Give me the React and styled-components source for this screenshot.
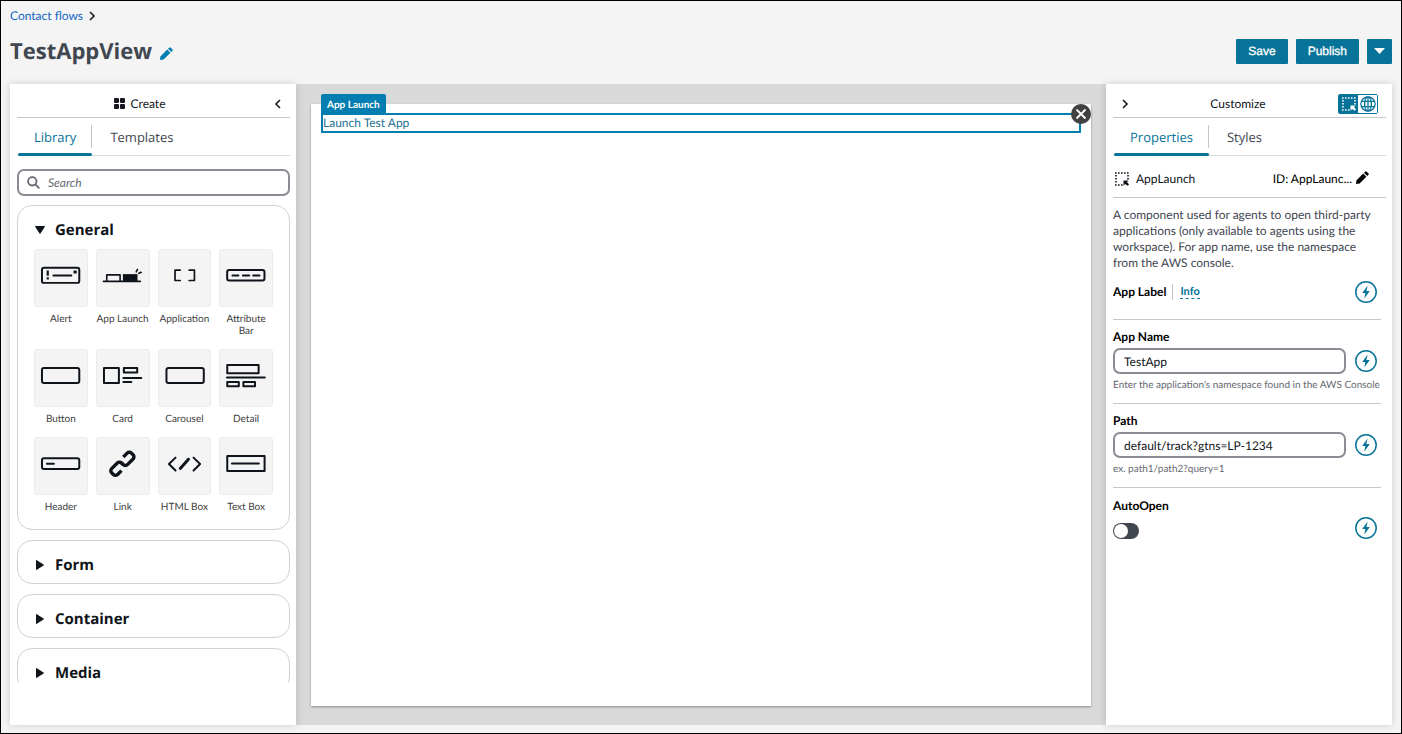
import { useState } from 'react'
import styled, { createGlobalStyle } from 'styled-components'

const teal = '#077398'
const line = '#c6c6cd'
const ink = '#0f141a'
const headingFont = "'Open Sans', 'Noto Sans', sans-serif"

const GlobalStyle = createGlobalStyle`
    * {
        box-sizing: border-box;
    }
    body {
        margin: 0;
        background: #f4f4f4;
        color: ${ink};
        font-family: Lato, 'Open Sans', sans-serif;
        font-size: 12px;
        line-height: 16px;
        text-rendering: geometricPrecision;
    }
    button,
    input {
        font: inherit;
        color: inherit;
        text-rendering: inherit;
    }
    button {
        border: 0;
        padding: 0;
        background: none;
        cursor: pointer;
    }
    svg {
        display: block;
    }
`

const Page = styled.div`
    display: flex;
    flex-direction: column;
    height: 100vh;
    border: 1px solid #000;
    padding: 6px 9px 8px;
`

const Breadcrumb = styled.nav`
    display: flex;
    align-items: center;
    gap: 5px;
    height: 17px;

    a {
        color: #1166c4;
        text-decoration: none;
    }
`

const TitleBar = styled.header`
    display: flex;
    align-items: center;
    justify-content: space-between;
    height: 40px;
    margin: 7px 0 13px;
`

const TitleGroup = styled.div`
    display: flex;
    align-items: center;
    gap: 8px;
`

const Title = styled.h1`
    margin: 0;
    color: #414750;
    font-family: ${headingFont};
    font-size: 22px;
    line-height: 32px;
    font-weight: 700;
`

const RenameButton = styled.button`
    padding-top: 4px;
`

const Actions = styled.div`
    display: flex;
    gap: 8px;
`

const ActionButton = styled.button`
    display: flex;
    align-items: center;
    justify-content: center;
    height: 25px;
    padding: 0 ${(p) => (p.$narrow ? 7 : 12)}px;
    border-radius: 1px;
    background: ${teal};
    color: #fff;
    font-family: 'Liberation Sans', sans-serif;
    -webkit-text-stroke: 0.3px #fff;
`

const Workspace = styled.main`
    display: flex;
    flex: 1;
    min-height: 0;
`

const Panel = styled.section`
    display: flex;
    flex-direction: column;
    flex: 0 0 286px;
    min-width: 0;
    position: relative;
    padding: 0 6px 42px 7px;
    background: #fff;
    box-shadow: 0 0 8px rgba(0, 0, 0, 0.16);
`

const PanelHeader = styled.div`
    display: flex;
    align-items: center;
    flex: none;
    height: 34px;
    padding: 6px 8px 0;
    border-bottom: 1px solid ${line};
`

const PanelTitle = styled.h2`
    display: flex;
    flex: 1;
    align-items: center;
    justify-content: center;
    gap: 6px;
    margin: 0;
    font-size: 12px;
    font-weight: 400;
`

const HeaderStart = styled.div`
    display: flex;
    width: 17px;
`

const HeaderEnd = styled.div`
    display: flex;
    justify-content: flex-end;
    min-width: 28px;
`

const ModeGroup = styled.div`
    display: flex;
    border: 1px solid ${teal};
    border-radius: 2px;
`

const ModeButton = styled.button`
    display: flex;
    align-items: center;
    justify-content: center;
    width: 19px;
    height: 18px;
    background: ${(p) => (p.$active ? teal : '#fff')};
    color: ${(p) => (p.$active ? '#fff' : teal)};
`

const Tabs = styled.div`
    display: flex;
    flex: none;
    height: 38px;
    padding-left: 1px;
    border-bottom: 1px solid #d5dbdb;
`

const Tab = styled.button`
    position: relative;
    padding: 0 ${(p) => (p.$last ? 18 : 16)}px;
    color: ${(p) => (p.$active ? teal : '#424650')};
    font-family: ${headingFont};
    font-size: 13px;

    &::before {
        content: '';
        position: absolute;
        right: 0;
        top: 7px;
        height: 23px;
        border-right: 1px solid ${(p) => (p.$last ? 'transparent' : line)};
    }

    &::after {
        content: '';
        position: absolute;
        left: 0;
        right: 0;
        bottom: -1px;
        height: 3px;
        border-radius: 2px;
        background: ${(p) => (p.$active ? teal : 'transparent')};
    }
`

const SearchBox = styled.label`
    display: flex;
    align-items: center;
    flex: none;
    gap: 8px;
    height: 27px;
    margin: 13px 0 9px;
    padding: 0 8px;
    border: 2px solid #8c8c94;
    border-radius: 7px;

    input {
        flex: 1;
        min-width: 0;
        border: 0;
        padding: 0;
        outline: 0;
        background: none;
    }
    input::placeholder {
        color: #656871;
        font-style: italic;
    }
`

const Library = styled.div`
    display: flex;
    flex-direction: column;
    gap: 10px;
    flex: 1;
    min-height: 0;
    overflow: hidden;
`

const Group = styled.section`
    flex: none;
    border: 1px solid #d0d2d8;
    border-radius: 15px;
`

const GroupToggle = styled.button`
    display: flex;
    align-items: center;
    gap: 9px;
    width: 100%;
    height: 42px;
    padding: 5px 16px 0;
    font-family: ${headingFont};
    font-size: 15px;
    font-weight: 700;
`

const TileGrid = styled.div`
    display: grid;
    grid-template-columns: repeat(4, minmax(0, 1fr));
    gap: 12px 8px;
    padding: 1px 16px 16px;
`

const Tile = styled.button`
    display: flex;
    flex-direction: column;
    align-items: center;
    gap: 6px;
    color: #414141;
    font-size: 10px;
    line-height: 12px;
`

const TileArt = styled.span`
    display: flex;
    justify-content: center;
    width: 100%;
    border: 1px solid #e9ebed;
    border-radius: 3px;
    background: #f4f4f4;
    color: ${ink};
`

const Canvas = styled.section`
    display: flex;
    flex: 1;
    min-width: 0;
    padding: 20px 15px 19px;
    background: #d9d9d9;
`

const Sheet = styled.div`
    flex: 1;
    padding: 9px 10px;
    background: #fff;
    box-shadow: 0 1px 2px rgba(0, 28, 36, 0.4);
`

const Placed = styled.div`
    position: relative;
    height: 20px;
    border: 2px solid #047db1;

    a {
        display: block;
        color: #1f7396;
        text-decoration: none;
    }
`

const PlacedTag = styled.span`
    position: absolute;
    left: -2px;
    bottom: 16px;
    padding: 3px 6px 2px;
    border-radius: 2px 2px 0 0;
    background: #047db1;
    color: #fff;
    font-size: 10px;
    font-weight: 700;
`

const RemoveButton = styled.button`
    position: absolute;
    top: -11px;
    right: -12px;
`

const SelectedRow = styled.div`
    display: flex;
    align-items: center;
    gap: 7px;
    flex: none;
    height: 42px;
    padding: 4px 17px 0 2px;
    border-bottom: 1px solid ${line};
`

const SelectedId = styled.span`
    display: flex;
    align-items: center;
    gap: 4px;
    margin-left: auto;
    color: #000;

    button {
        padding-bottom: 3px;
    }
`

const Description = styled.p`
    margin: 9px 4px 0 0;
    color: #424650;
`

const Field = styled.div`
    display: grid;
    grid-template-columns: 1fr 22px;
    column-gap: 9px;
    align-items: center;
    margin-right: 5px;
    padding: ${(p) => p.$padding || '9px 4px 11px 0'};
    border-bottom: 1px solid ${(p) => (p.$last ? 'transparent' : line)};
`

const FieldLabel = styled.label`
    grid-column: 1 / -1;
    margin-bottom: 3px;
    font-weight: 700;
    color: #000;
`

const LabelRow = styled.div`
    display: flex;
    align-items: center;
    font-weight: 700;
    color: #000;

    a {
        margin-left: 6px;
        padding-left: 7px;
        border-left: 1px solid ${line};
        color: ${teal};
        font-size: 11px;
        text-decoration: none;
    }
    a span {
        border-bottom: 1px dashed ${teal};
    }
`

const TextInput = styled.input`
    width: 100%;
    height: 26px;
    padding: 0 9px;
    border: 2px solid #8c8c94;
    border-radius: 7px;
    background: #fff;
`

const Hint = styled.small`
    grid-column: 1 / -1;
    margin-top: 4px;
    color: #656871;
    font-size: 10px;
    line-height: 14px;
    white-space: nowrap;
`

const Switch = styled.input`
    appearance: none;
    width: 26px;
    height: 16px;
    margin: 5px 0 0;
    padding: 1px;
    border-radius: 8px;
    background: ${(p) => (p.checked ? teal : '#424650')};
    cursor: pointer;

    &::before {
        content: '';
        display: block;
        width: 14px;
        height: 14px;
        margin-left: ${(p) => (p.checked ? 10 : 0)}px;
        border-radius: 50%;
        background: #fff;
    }
`

const Chevron = ({ left }) => (
    <svg width="8" height="10" viewBox="0 0 8 10" fill="none" stroke="#16191f" strokeWidth="1.6">
        <path d={left ? 'M6 1 2 5l4 4' : 'M2 1l4 4-4 4'} />
    </svg>
)

const Pencil = ({ color }) => (
    <svg width="13" height="13" viewBox="0 0 13 13" fill={color}>
        <path d="M0 13l.4-3.6L7.2 2.6l3.2 3.2-6.8 6.8zM8 1.8 9.4.4q.5-.5 1 0l2.2 2.2q.5.5 0 1L11.2 5z" />
    </svg>
)

const Caret = ({ open }) => (
    <svg width="12" height="12" viewBox="0 0 12 12" fill={ink} stroke={ink} strokeLinejoin="round">
        <path d={open ? 'M1.5 2.5h9L6 9.5z' : 'M2.5 1.5v9l7-4.5z'} />
    </svg>
)

const Marquee = () => (
    <svg width="14" height="14" viewBox="0 0 14 14" fill="none" stroke="currentColor">
        <path d="M0 1h14M0 13h8M1 3v9M13 3v5" strokeWidth="1.6" strokeDasharray="1.6 1.4" />
        <path d="M8.5 8.5h5L12 10l2 2.4-1.4 1.4-2.4-1.8-1.7 1.5z" fill="currentColor" stroke="none" />
    </svg>
)

const Globe = () => (
    <svg width="16" height="16" viewBox="0 0 15 15" fill="none" stroke="currentColor" strokeWidth="1.2">
        <circle cx="7.5" cy="7.5" r="6.7" />
        <ellipse cx="7.5" cy="7.5" rx="3.2" ry="6.7" />
        <path d="M7.5 1v13M1.5 5h12M1.5 10h12" />
    </svg>
)

const Bolt = () => (
    <svg width="22" height="22" viewBox="0 0 22 22">
        <circle cx="11" cy="11" r="10.2" fill="#fff" stroke={teal} strokeWidth="1.5" />
        <path d="M12.6 4.6 7.2 12h3.2l-1.1 5.4L14.8 10h-3.4z" fill={teal} />
    </svg>
)

const art = {
    Alert: (
        <>
            <rect x="8" y="18.7" width="37.5" height="15.2" rx="2" />
            <path d="M19.5 26.4h18" />
            <path
                d="M12.7 21.5h2.2v5.3h-2.2zM12.7 28.2h2.2v2.2h-2.2zM39.7 21.4h3.2v3.2h-3.2z"
                fill="currentColor"
                stroke="none"
            />
        </>
    ),
    'App Launch': (
        <g strokeWidth="1.6">
            <path d="M7.5 32.4h37M10.8 32v-6.1h13.4V32M40.4 22.8l1.3-2.4M43 24.3l2.4-1.1" />
            <path d="M27 25.1h14.7v7.3H27z" fill="currentColor" stroke="none" />
        </g>
    ),
    Application: <path d="M22.3 21h-5.2v10.5h5.2M31.3 21h5.3v10.5h-5.3" strokeWidth="1.7" />,
    'Attribute Bar': (
        <>
            <rect x="8.2" y="21" width="37.5" height="10.6" rx="2" />
            <path d="M13.5 26.4h6M24 26.4h6.4M34.3 26.4h6.4" />
        </>
    ),
    Button: <rect x="8" y="19" width="37.5" height="15" rx="2" />,
    Card: <path d="M8 19h15v15H8zM28 19h13.4v4.4H28zM27.5 29h18M27.5 33h8" />,
    Carousel: <rect x="8.5" y="19" width="37.5" height="15" rx="2" />,
    Detail: <path d="M8.3 16h31.5v8.2H8.3zM8 28.4h38M8.3 33h11.6v4.2H8.3zM24.5 33h11.7v4.2H24.5z" />,
    Header: (
        <>
            <rect x="8" y="21.3" width="37.5" height="10.8" rx="2" />
            <path d="M13 26.7h7" />
        </>
    ),
    Link: (
        <g transform="translate(26.5 26.8) rotate(-45)" strokeWidth="3.4" strokeLinecap="butt">
            <path d="M-5.5 4.2H-11a3 3 0 0 1-3-3v-2.4a3 3 0 0 1 3-3h8a3 3 0 0 1 3 3v2.7" />
            <path d="M5.5-4.2H11a3 3 0 0 1 3 3v2.4a3 3 0 0 1-3 3H3a3 3 0 0 1-3-3v-2.7" />
        </g>
    ),
    'HTML Box': (
        <>
            <path d="M17.6 20.6 11 27l6.6 6.6M35.7 20.6l6.6 6.4-6.6 6.6" />
            <path d="M30.6 22.2 22.4 31.4" strokeWidth="3" />
        </>
    ),
    'Text Box': <path d="M8.3 19h37.5v15H8.3zM13 26.6h27" />
}

const LibraryGroup = ({ name, items }) => {
    const [open, setOpen] = useState(Boolean(items))

    return (
        <Group>
            <GroupToggle aria-expanded={open} onClick={() => setOpen(!open)}>
                <Caret open={open} />
                {name}
            </GroupToggle>
            {open && items && (
                <TileGrid>
                    {items.map((item) => (
                        <Tile key={item}>
                            <TileArt>
                                <svg
                                    width="52"
                                    height="56"
                                    viewBox="1 1 52 56"
                                    fill="none"
                                    stroke="currentColor"
                                    strokeWidth="2"
                                    strokeLinecap="round"
                                    strokeLinejoin="round"
                                >
                                    {art[item]}
                                </svg>
                            </TileArt>
                            {item}
                        </Tile>
                    ))}
                </TileGrid>
            )}
        </Group>
    )
}

const TextField = ({ id, label, hint, initial }) => {
    const [value, setValue] = useState(initial)

    return (
        <Field>
            <FieldLabel htmlFor={id}>{label}</FieldLabel>
            <TextInput id={id} value={value} onChange={(e) => setValue(e.target.value)} />
            <button aria-label={`Set ${label} dynamically`}>
                <Bolt />
            </button>
            <Hint>{hint}</Hint>
        </Field>
    )
}

function App() {
    const [autoOpen, setAutoOpen] = useState(false)

    return (
        <Page>
            <GlobalStyle />
            <Breadcrumb>
                <a href="#flows">Contact flows</a>
                <Chevron />
            </Breadcrumb>
            <TitleBar>
                <TitleGroup>
                    <Title>TestAppView</Title>
                    <RenameButton aria-label="Rename view">
                        <Pencil color="#047db1" />
                    </RenameButton>
                </TitleGroup>
                <Actions>
                    <ActionButton>Save</ActionButton>
                    <ActionButton>Publish</ActionButton>
                    <ActionButton $narrow aria-label="More actions">
                        <svg width="11" height="6" viewBox="0 0 11 6" fill="#fff">
                            <path d="M0 0h11L5.5 6z" />
                        </svg>
                    </ActionButton>
                </Actions>
            </TitleBar>

            <Workspace>
                <Panel>
                    <PanelHeader>
                        <PanelTitle>
                            <svg width="11" height="11" viewBox="0 0 11 11" fill="#16191f">
                                <rect width="5" height="5" rx="1" />
                                <rect x="6" width="5" height="5" rx="1" />
                                <rect y="6" width="5" height="5" rx="1" />
                                <rect x="6" y="6" width="5" height="5" rx="1" />
                            </svg>
                            Create
                        </PanelTitle>
                        <HeaderEnd>
                            <button aria-label="Collapse library">
                                <Chevron left />
                            </button>
                        </HeaderEnd>
                    </PanelHeader>
                    <Tabs>
                        <Tab $active>Library</Tab>
                        <Tab $last>Templates</Tab>
                    </Tabs>
                    <SearchBox>
                        <svg width="13" height="13" viewBox="0 0 13 13" fill="none" stroke="#656871" strokeWidth="1.8">
                            <circle cx="5.3" cy="5.3" r="4.2" />
                            <path d="M8.3 8.3l4 4" />
                        </svg>
                        <input type="text" placeholder="Search" aria-label="Search" />
                    </SearchBox>
                    <Library>
                        <LibraryGroup name="General" items={Object.keys(art)} />
                        <LibraryGroup name="Form" />
                        <LibraryGroup name="Container" />
                        <LibraryGroup name="Media" />
                    </Library>
                </Panel>

                <Canvas>
                    <Sheet>
                        <Placed>
                            <a href="#launch">Launch Test App</a>
                            <PlacedTag>App Launch</PlacedTag>
                            <RemoveButton aria-label="Remove component">
                                <svg width="20" height="20" viewBox="0 0 20 20">
                                    <circle cx="10" cy="10" r="10" fill="#414141" />
                                    <path d="M5.5 5.5l9 9M14.5 5.5l-9 9" stroke="#fff" strokeWidth="1.8" />
                                </svg>
                            </RemoveButton>
                        </Placed>
                    </Sheet>
                </Canvas>

                <Panel>
                    <PanelHeader>
                        <HeaderStart>
                            <button aria-label="Collapse properties">
                                <Chevron />
                            </button>
                        </HeaderStart>
                        <PanelTitle>Customize</PanelTitle>
                        <HeaderEnd>
                            <ModeGroup>
                                <ModeButton $active aria-label="Component">
                                    <Marquee />
                                </ModeButton>
                                <ModeButton aria-label="Global">
                                    <Globe />
                                </ModeButton>
                            </ModeGroup>
                        </HeaderEnd>
                    </PanelHeader>
                    <Tabs>
                        <Tab $active>Properties</Tab>
                        <Tab $last>Styles</Tab>
                    </Tabs>
                    <SelectedRow>
                        <Marquee />
                        AppLaunch
                        <SelectedId>
                            ID: AppLaunc...
                            <button aria-label="Edit ID">
                                <Pencil color="#000" />
                            </button>
                        </SelectedId>
                    </SelectedRow>
                    <Description>
                        A component used for agents to open third-party applications (only available to agents using the
                        workspace). For app name, use the namespace from the AWS console.
                    </Description>
                    <Field $padding="10px 4px 16px 0">
                        <LabelRow>
                            App Label
                            <a href="#info">
                                <span>Info</span>
                            </a>
                        </LabelRow>
                        <button aria-label="Set App Label dynamically">
                            <Bolt />
                        </button>
                    </Field>
                    <TextField
                        id="app-name"
                        label="App Name"
                        initial="TestApp"
                        hint="Enter the application's namespace found in the AWS Console"
                    />
                    <TextField id="path" label="Path" initial="default/track?gtns=LP-1234" hint="ex. path1/path2?query=1" />
                    <Field $last $padding="10px 4px 11px 0">
                        <FieldLabel htmlFor="auto-open">AutoOpen</FieldLabel>
                        <Switch
                            id="auto-open"
                            type="checkbox"
                            role="switch"
                            checked={autoOpen}
                            onChange={(e) => setAutoOpen(e.target.checked)}
                        />
                        <button aria-label="Set AutoOpen dynamically">
                            <Bolt />
                        </button>
                    </Field>
                </Panel>
            </Workspace>
        </Page>
    )
}

export default App
